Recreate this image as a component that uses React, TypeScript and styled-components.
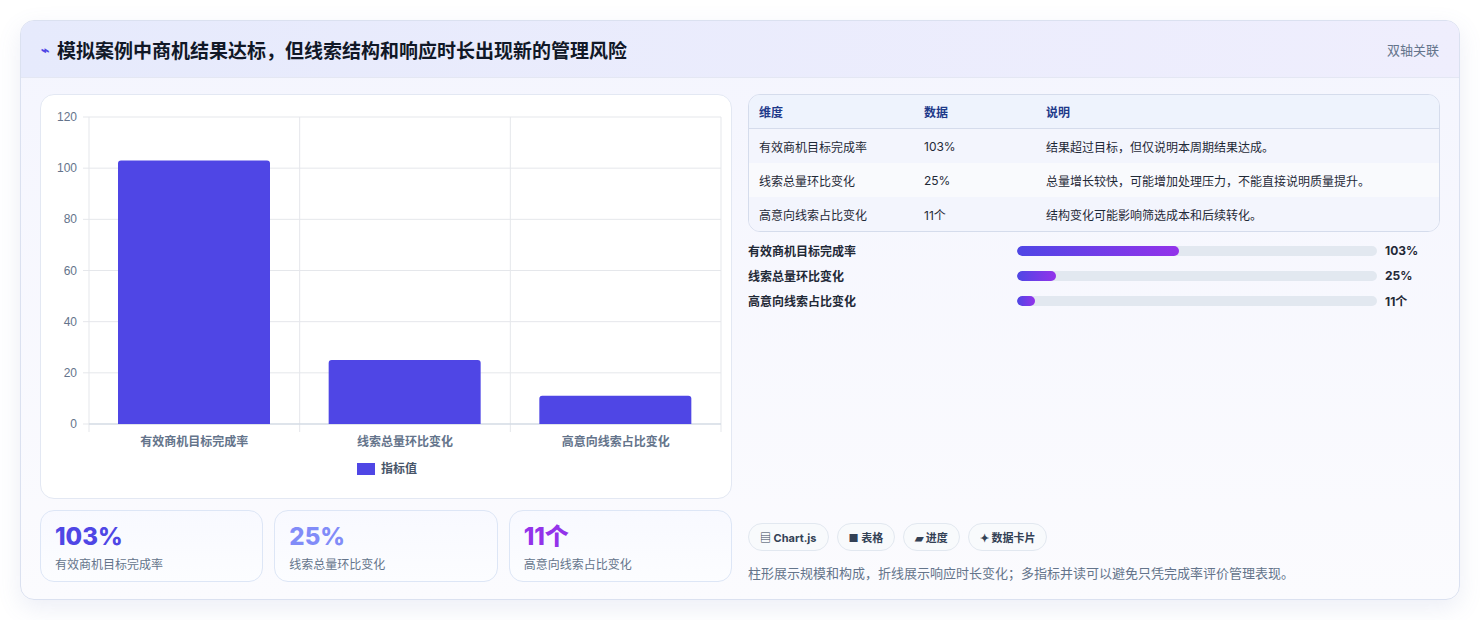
import styled, { createGlobalStyle } from 'styled-components';

const GlobalStyle = createGlobalStyle`
  body {
    margin: 0;
    background: #ffffff;
    font-family: Inter, "Noto Sans CJK SC", sans-serif;
  }
`;

type Metric = { name: string; value: number; display: string; note: string };

const METRICS: Metric[] = [
  { name: '有效商机目标完成率', value: 103, display: '103%', note: '结果超过目标，但仅说明本周期结果达成。' },
  { name: '线索总量环比变化', value: 25, display: '25%', note: '总量增长较快，可能增加处理压力，不能直接说明质量提升。' },
  { name: '高意向线索占比变化', value: 11, display: '11个', note: '结构变化可能影响筛选成本和后续转化。' },
];

const STAT_COLORS = ['#4f46e5', '#818cf8', '#9333ea'];

// chart geometry in svg units
const PLOT = { left: 48, right: 680, top: 22, bottom: 329, max: 120 };

const BarChart = () => {
  const h = PLOT.bottom - PLOT.top;
  const colW = (PLOT.right - PLOT.left) / METRICS.length;
  const yFor = (v: number) => PLOT.bottom - (v / PLOT.max) * h;
  return (
    <svg width="692" height="403" viewBox="0 0 692 403">
      {[0, 20, 40, 60, 80, 100, 120].map((t) => (
        <g key={t}>
          <line x1={PLOT.left - 6} x2={PLOT.right} y1={yFor(t)} y2={yFor(t)} stroke="#e5e7eb" />
          <text x={PLOT.left - 12} y={yFor(t) + 4} textAnchor="end" fontSize="12" fill="#64748b" fontFamily="Liberation Sans, sans-serif">
            {t}
          </text>
        </g>
      ))}
      {[0, 1, 2, 3].map((i) => (
        <line key={i} x1={PLOT.left + i * colW} x2={PLOT.left + i * colW} y1={PLOT.top} y2={PLOT.bottom + 8} stroke="#e5e7eb" />
      ))}
      <line x1={PLOT.left} x2={PLOT.right} y1={PLOT.bottom} y2={PLOT.bottom} stroke="#cbd5e1" />
      {METRICS.map((m, i) => {
        const x = PLOT.left + i * colW + 29;
        const y = yFor(m.value);
        return (
          <g key={m.name}>
            <path
              d={`M${x} ${PLOT.bottom} V${y + 3} Q${x} ${y} ${x + 3} ${y} H${x + 149} Q${x + 152} ${y} ${x + 152} ${y + 3} V${PLOT.bottom} Z`}
              fill="#4f46e5"
            />
            <text x={PLOT.left + i * colW + colW / 2} y={351} textAnchor="middle" fontSize="12" fontWeight="600" fill="#64748b">
              {m.name}
            </text>
          </g>
        );
      })}
      <rect x="316" y="368" width="18" height="12" fill="#4f46e5" />
      <text x="340" y="378" fontSize="12" fontWeight="600" fill="#475569">指标值</text>
    </svg>
  );
};

const App = () => (
  <Page>
    <GlobalStyle />
    <Card>
      <Header>
        <Title>
          <TitleIcon>⌁</TitleIcon>
          模拟案例中商机结果达标，但线索结构和响应时长出现新的管理风险
        </Title>
        <HeaderTag>双轴关联</HeaderTag>
      </Header>
      <Body>
        <LeftCol>
          <ChartCard>
            <BarChart />
          </ChartCard>
          <StatRow>
            {METRICS.map((m, i) => (
              <StatCard key={m.name}>
                <StatValue $color={STAT_COLORS[i]}>{m.display}</StatValue>
                <StatLabel>{m.name}</StatLabel>
              </StatCard>
            ))}
          </StatRow>
        </LeftCol>
        <RightCol>
          <TableWrap>
            <Table>
              <thead>
                <tr>
                  <Th>维度</Th>
                  <Th>数据</Th>
                  <Th>说明</Th>
                </tr>
              </thead>
              <tbody>
                {METRICS.map((m, i) => (
                  <Tr key={m.name} $alt={i % 2 === 1}>
                    <Td>{m.name}</Td>
                    <Td>{m.display}</Td>
                    <Td>{m.note}</Td>
                  </Tr>
                ))}
              </tbody>
            </Table>
          </TableWrap>
          <Progress>
            {METRICS.map((m) => (
              <ProgressRow key={m.name}>
                <ProgressName>{m.name}</ProgressName>
                <Track>
                  <Fill style={{ width: `${Math.max((m.value / 229) * 100, 5)}%` }} />
                </Track>
                <ProgressValue>{m.display}</ProgressValue>
              </ProgressRow>
            ))}
          </Progress>
          <Spacer />
          <Chips>
            <Chip>▤ Chart.js</Chip>
            <Chip>■ 表格</Chip>
            <Chip>▰ 进度</Chip>
            <Chip>✦ 数据卡片</Chip>
          </Chips>
          <Footnote>柱形展示规模和构成，折线展示响应时长变化；多指标并读可以避免只凭完成率评价管理表现。</Footnote>
        </RightCol>
      </Body>
    </Card>
  </Page>
);

const Page = styled.div`
  padding: 20px;
`;

const Card = styled.div`
  width: 1440px;
  height: 580px;
  box-sizing: border-box;
  border: 1px solid #dbe1f0;
  border-radius: 14px;
  background: linear-gradient(180deg, #f4f5fe 0%, #fbfbfe 100%);
  box-shadow: 0 8px 24px rgba(100, 116, 180, 0.12);
  overflow: hidden;
  display: flex;
  flex-direction: column;
`;

const Header = styled.div`
  height: 56px;
  flex-shrink: 0;
  display: flex;
  align-items: center;
  justify-content: space-between;
  padding: 0 20px;
  background: linear-gradient(90deg, #e6eafc 0%, #efeefd 100%);
  border-bottom: 1px solid #e4e7f3;
`;

const Title = styled.h1`
  margin: 0;
  font-size: 19px;
  font-weight: 700;
  color: #111827;
  display: flex;
  align-items: center;
  gap: 8px;
`;

const TitleIcon = styled.span`
  font-size: 14px;
  color: #4f46e5;
`;

const HeaderTag = styled.span`
  font-size: 13px;
  color: #64748b;
`;

const Body = styled.div`
  flex: 1;
  display: grid;
  grid-template-columns: 692px 692px;
  gap: 16px;
  padding: 16px 19px 18px 19px;
`;

const LeftCol = styled.div`
  display: flex;
  flex-direction: column;
  gap: 11px;
`;

const ChartCard = styled.div`
  height: 403px;
  background: #ffffff;
  border: 1px solid #e3e8f3;
  border-radius: 14px;
  overflow: hidden;
`;

const StatRow = styled.div`
  display: grid;
  grid-template-columns: repeat(3, 1fr);
  gap: 11px;
`;

const StatCard = styled.div`
  height: 72px;
  box-sizing: border-box;
  padding: 12px 14px;
  border: 1px solid #dde6f6;
  border-radius: 14px;
  background: linear-gradient(180deg, #f8f9ff, #fcfdff);
`;

const StatValue = styled.div<{ $color: string }>`
  font-size: 24px;
  font-weight: 800;
  line-height: 28px;
  color: ${({ $color }) => $color};
`;

const StatLabel = styled.div`
  margin-top: 4px;
  font-size: 12px;
  color: #64748b;
`;

const RightCol = styled.div`
  display: flex;
  flex-direction: column;
`;

const TableWrap = styled.div`
  border: 1px solid #d5dcec;
  border-radius: 12px;
  overflow: hidden;
`;

const Table = styled.table`
  width: 100%;
  border-collapse: collapse;
  font-size: 12px;
`;

const Th = styled.th`
  text-align: left;
  height: 33px;
  padding: 0 10px;
  font-weight: 700;
  color: #1e3a8a;
  background: #eef3fd;
  border-bottom: 1px solid #d5dcec;
  &:nth-child(1) { width: 145px; }
  &:nth-child(2) { width: 102px; }
`;

const Tr = styled.tr<{ $alt: boolean }>`
  background: ${({ $alt }) => ($alt ? '#f9fafd' : '#f3f5fd')};
  & + & td { border-top: 1px solid #e3e7f1; }
`;

const Td = styled.td`
  height: 34px;
  padding: 0 10px;
  color: #1f2937;
`;

const Progress = styled.div`
  margin-top: 10px;
  display: flex;
  flex-direction: column;
  gap: 8px;
`;

const ProgressRow = styled.div`
  display: grid;
  grid-template-columns: 261px 360px 1fr;
  align-items: center;
  gap: 8px;
  height: 17px;
`;

const ProgressName = styled.span`
  font-size: 12px;
  font-weight: 600;
  color: #1f2937;
`;

const Track = styled.div`
  height: 10px;
  border-radius: 5px;
  background: #e2e8f0;
  overflow: hidden;
`;

const Fill = styled.div`
  height: 100%;
  border-radius: 5px;
  background: linear-gradient(90deg, #4f46e5, #9333ea);
`;

const ProgressValue = styled.span`
  font-size: 12px;
  font-weight: 700;
  color: #1f2937;
`;

const Spacer = styled.div`
  flex: 1;
`;

const Chips = styled.div`
  display: flex;
  gap: 8px;
`;

const Chip = styled.span`
  height: 28px;
  box-sizing: border-box;
  padding: 0 11px;
  display: inline-flex;
  align-items: center;
  border: 1px solid #e2e8f0;
  border-radius: 14px;
  background: #f8fafc;
  font-size: 11px;
  font-weight: 700;
  color: #334155;
`;

const Footnote = styled.p`
  margin: 12px 0 0;
  font-size: 13px;
  color: #64748b;
`;

export default App;
